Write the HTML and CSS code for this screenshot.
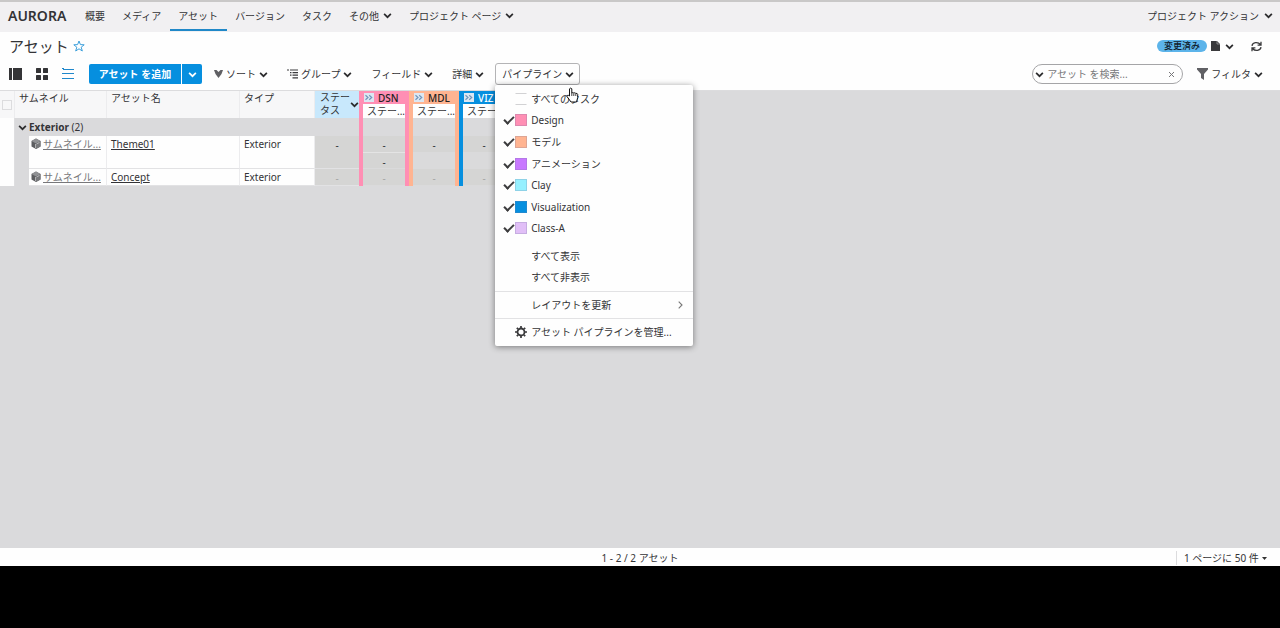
FILE: index.html
```html
<!DOCTYPE html>
<html lang="ja">
<head>
<meta charset="utf-8">
<title>AURORA - アセット</title>
<link rel="stylesheet" href="styles.css">
</head>
<body>
<svg class="defs" aria-hidden="true">
  <symbol id="chev" viewBox="0 0 8 8"><path d="M1 2.5 4 5.5 7 2.5" fill="none" stroke="currentColor" stroke-width="1.5"/></symbol>
  <symbol id="cube" viewBox="0 0 10 12"><path d="M5 .5 9.500 3v5.500L5 11 .5 8.500V3z" fill="#5c5d60"/><path d="M5 .5 9.500 3 5 5.500.5 3z" fill="#909194"/><path d="M5 5.500V11l4.500-2.500V3z" fill="#77787b"/><path d="M4.500 6v4M5.500 6 8.500 4.400" fill="none" stroke="#c4c4c6" stroke-width=".8"/></symbol>
  <symbol id="pipe" viewBox="0 0 10 9"><rect width="10" height="9" fill="#dce7f2"/><path d="M1.500 2.200 4 4.500 1.500 6.800M5.200 2.200l2.500 2.300-2.500 2.300" fill="none" stroke="#7195ba" stroke-width="1.200"/></symbol>
</svg>
<div class="app">
  <header class="nav">
    <span class="brand">AURORA</span>
    <nav class="tabs">
      <a class="tab" href="#">概要</a>
      <a class="tab" href="#">メディア</a>
      <a class="tab active" href="#">アセット</a>
      <a class="tab" href="#">バージョン</a>
      <a class="tab" href="#">タスク</a>
      <a class="tab" href="#">その他<svg class="chev"><use href="#chev"/></svg></a>
      <a class="tab" href="#">プロジェクト ページ<svg class="chev"><use href="#chev"/></svg></a>
    </nav>
    <button class="tab project-actions">プロジェクト アクション<svg class="chev"><use href="#chev"/></svg></button>
  </header>

  <div class="heading">
    <h1 class="title">アセット</h1>
    <button class="icon-btn star" aria-label="お気に入り"><svg width="12" height="12" viewBox="0 0 12 12"><path d="M6 1 7.400 4.600 11.200 4.800 8.200 7.200 9.300 11 6 8.800 2.700 11 3.800 7.200.8 4.800 4.600 4.600z" fill="none" stroke="#3b9fdb"/></svg></button>
    <div class="page-tools">
      <span class="badge">変更済み</span>
      <button class="icon-btn save" aria-label="ページを保存"><svg width="9" height="10" viewBox="0 0 9 10"><path d="M0 0h6l3 3v7H0z" fill="#3a3a3c"/><path d="M6 0v3h3" fill="none" stroke="#aaa" stroke-width=".7"/></svg><svg class="chev"><use href="#chev"/></svg></button>
      <button class="icon-btn" aria-label="更新"><svg width="11" height="11" viewBox="0 0 11 11" fill="none" stroke="#3a3a3c" stroke-width="1.300"><path d="M1 4.800C1.500 1 7 .5 9.500 3.500M10 .8v3.400H6.600M10 6.200C9.500 10 4 10.500 1.500 7.500M1 10.200V6.800h3.400"/></svg></button>
    </div>
  </div>

  <div class="toolbar">
    <div class="views">
      <button class="icon-btn" aria-label="詳細表示"><svg width="14" height="12" viewBox="0 0 14 12" fill="#343436"><path d="M0 0h3v12H0zM4 0h9v12H4z"/></svg></button>
      <button class="icon-btn" aria-label="サムネイル表示"><svg width="13" height="12" viewBox="0 0 13 12" fill="#343436"><rect width="5" height="5" rx=".5"/><rect x="7" width="5" height="5" rx=".5"/><rect y="7" width="5" height="5" rx=".5"/><rect x="7" y="7" width="5" height="5" rx=".5"/></svg></button>
      <button class="icon-btn" aria-label="リスト表示"><svg width="13" height="12" viewBox="0 0 13 12" fill="#2088cc"><path d="M1 1h11v1H1zM1 5h11v1H1zM1 10h11v1H1zM0 0h2v1H0zM0 5h1v1H0zM0 10h1v1H0z"/></svg></button>
    </div>
    <div class="split">
      <button class="add">アセット を追加</button>
      <button class="add-more" aria-label="その他の追加方法"><svg class="chev"><use href="#chev"/></svg></button>
    </div>
    <div class="menus">
      <button class="menu-btn"><svg width="9" height="8" viewBox="0 0 9 8"><path d="M0 0h2.500l2 2 2-2H9L7.500 4 4.500 8 1.500 4z" fill="#606064"/></svg><span>ソート</span><svg class="chev"><use href="#chev"/></svg></button>
      <button class="menu-btn"><svg width="11" height="10" viewBox="0 0 11 10" fill="none" stroke="#3a3a3c" stroke-width="1.200"><path d="M0 1h2M3 1h8M3 3.600h1.500M5.500 3.600H11M3 6.200h1.500M5.500 6.200H11M5.500 8.800H11"/></svg><span>グループ</span><svg class="chev"><use href="#chev"/></svg></button>
      <button class="menu-btn"><span>フィールド</span><svg class="chev"><use href="#chev"/></svg></button>
      <button class="menu-btn"><span>詳細</span><svg class="chev"><use href="#chev"/></svg></button>
    </div>
    <div class="pipeline">
      <button class="menu-btn open" aria-expanded="true"><span>パイプライン</span><svg class="chev"><use href="#chev"/></svg></button>
      <div class="dropdown">
        <div class="steps">
          <label class="item"><input class="check" type="checkbox"><span class="swatch none"></span>すべてのタスク</label>
          <label class="item"><input class="check" type="checkbox" checked><span class="swatch design"></span>Design</label>
          <label class="item"><input class="check" type="checkbox" checked><span class="swatch model"></span>モデル</label>
          <label class="item"><input class="check" type="checkbox" checked><span class="swatch anim"></span>アニメーション</label>
          <label class="item"><input class="check" type="checkbox" checked><span class="swatch clay"></span>Clay</label>
          <label class="item"><input class="check" type="checkbox" checked><span class="swatch viz"></span>Visualization</label>
          <label class="item"><input class="check" type="checkbox" checked><span class="swatch classa"></span>Class-A</label>
        </div>
        <div class="actions">
          <button class="action">すべて表示</button>
          <button class="action">すべて非表示</button>
        </div>
        <div class="section"><button class="action">レイアウトを更新<svg class="arrow" width="5" height="8" viewBox="0 0 5 8"><path d="M.7.7 4 4 .7 7.300" fill="none" stroke="#777" stroke-width="1.100"/></svg></button></div>
        <div class="section"><button class="action with-icon"><svg width="12" height="12" viewBox="0 0 12 12" fill="none" stroke="#39393b"><circle cx="6" cy="6" r="3.500" stroke-width="1.800"/><path d="M6 0v2M6 10v2M0 6h2M10 6h2M1.800 1.800l1.400 1.400M8.800 8.800l1.400 1.400M1.800 10.200l1.400-1.400M8.800 3.200l1.400-1.400" stroke-width="1.700"/></svg>アセット パイプラインを管理...</button></div>
      </div>
      <svg class="pointer" width="13" height="16" viewBox="0 0 13 16"><path d="M3.500 9V1.800q1.300-1.500 2.300 0V6q1-.8 2 0 1-.6 2 .4 1.600-.4 1.900 1v3.200L10.500 15H5L1 9.500q0-1.500 1.300-1.200z" fill="#fff" stroke="#111"/><path d="M5.800 6v3M7.800 6.500v2.500M9.800 7v2" stroke="#111" stroke-width=".8"/></svg>
    </div>
    <div class="find">
      <div class="search">
        <svg class="chev"><use href="#chev"/></svg>
        <input class="search-input" type="text" placeholder="アセット を検索..." aria-label="アセット を検索">
        <button class="icon-btn" aria-label="クリア"><svg width="7" height="7" viewBox="0 0 7 7"><path d="M1 1l5 5M6 1 1 6" stroke="#77777a"/></svg></button>
      </div>
      <button class="menu-btn"><svg width="11" height="12" viewBox="0 0 11 12"><path d="M0 0h11v1.500L7 6v6L4 10V6L0 1.500z" fill="#606064"/></svg><span>フィルタ</span><svg class="chev"><use href="#chev"/></svg></button>
    </div>
  </div>

  <main class="grid-area">
    <table class="assets">
      <colgroup><col class="c-check"><col class="c-indent"><col class="c-thumb"><col class="c-name"><col class="c-type"><col class="c-status"><col class="c-step"><col class="c-step"><col class="c-step"></colgroup>
      <thead>
        <tr class="head">
          <th class="select"><input class="select-all" type="checkbox" aria-label="すべて選択"></th>
          <th colspan="2">サムネイル</th>
          <th>アセット名</th>
          <th>タイプ</th>
          <th class="status"><div class="status-head"><span>ステータス</span><svg class="chev"><use href="#chev"/></svg></div></th>
          <th class="step dsn"><div class="step-name"><svg width="10" height="9"><use href="#pipe"/></svg>DSN</div><div class="step-field">ステー...</div></th>
          <th class="step mdl"><div class="step-name"><svg width="10" height="9"><use href="#pipe"/></svg>MDL</div><div class="step-field">ステー...</div></th>
          <th class="step vis"><div class="step-name"><svg width="10" height="9"><use href="#pipe"/></svg>VIZ</div><div class="step-field">ステー...</div></th>
        </tr>
      </thead>
      <tbody>
        <tr class="group">
          <td class="select"></td>
          <td colspan="5"><div class="group-name"><svg class="chev"><use href="#chev"/></svg><span><b>Exterior</b> (2)</span></div></td>
          <td class="step dsn"></td><td class="step mdl"></td><td class="step vis"></td>
        </tr>
        <tr class="row tall">
          <td class="select"></td><td class="indent"></td>
          <td class="cell"><a class="thumb" href="#"><svg width="10" height="12"><use href="#cube"/></svg><span>サムネイル...</span></a></td>
          <td class="cell"><a class="name" href="#">Theme01</a></td>
          <td class="cell">Exterior</td>
          <td class="value"><div class="dash">-</div></td>
          <td class="value step dsn"><div class="dash">-</div><div class="dash second">-</div></td>
          <td class="value step mdl"><div class="dash">-</div></td>
          <td class="value step vis"><div class="dash">-</div></td>
        </tr>
        <tr class="row">
          <td class="select"></td><td class="indent"></td>
          <td class="cell"><a class="thumb" href="#"><svg width="10" height="12"><use href="#cube"/></svg><span>サムネイル...</span></a></td>
          <td class="cell"><a class="name" href="#">Concept</a></td>
          <td class="cell">Exterior</td>
          <td class="value faint"><div class="dash">-</div></td>
          <td class="value faint step dsn"><div class="dash">-</div></td>
          <td class="value faint step mdl"><div class="dash">-</div></td>
          <td class="value faint step vis"><div class="dash">-</div></td>
        </tr>
      </tbody>
    </table>
  </main>

  <footer class="pager">
    <span class="count">1 - 2 / 2 アセット</span>
    <div class="per-page">
      <select class="page-size" aria-label="ページあたりの件数"><option>1 ページに 50 件</option></select>
      <svg width="5" height="3" viewBox="0 0 5 3"><path d="M0 0h5L2.500 3z" fill="#333"/></svg>
    </div>
  </footer>
</div>
</body>
</html>
```
FILE: styles.css
```css
* { box-sizing: border-box; }

body {
  margin: 0;
  background: #000;
  color: #333336;
  font: 10px/14px "Noto Sans", "Noto Sans CJK JP", sans-serif;
}

button, input, select { font: inherit; color: inherit; }
button { margin: 0; padding: 0; border: 0; background: none; cursor: pointer; }
a { color: inherit; text-decoration: none; }
svg { display: block; flex: none; }

.defs { position: absolute; width: 0; height: 0; }
.chev { width: 9px; height: 9px; color: #2b2b2d; }

.app {
  display: flex;
  flex-direction: column;
  min-height: calc(100vh - 62px);
  background: #fefefe;
}

/* Navigation */
.nav {
  display: flex;
  height: 32px;
  padding: 0 7px 0 8px;
  border-top: 2px solid #c9c8c8;
  background: #f1f0f2;
}
.brand {
  width: 69px;
  font-size: 14px;
  font-weight: 600;
  line-height: 28px;
}
.tabs { display: flex; }
.tab {
  display: flex;
  align-items: center;
  gap: 5px;
  height: 29px;
  border-bottom: 2px solid transparent;
  white-space: nowrap;
}
.tabs .tab { gap: 4px; padding: 0 9px 0 8px; }
.tabs .active { border-color: #2088c8; }
.project-actions { margin-left: auto; }

/* Page heading */
.heading {
  display: flex;
  align-items: center;
  height: 28px;
  padding: 0 18px 0 9px;
}
.title { margin: 0; font-size: 15px; font-weight: 400; line-height: 22px; }
.star { margin-left: 4px; }
.icon-btn { display: flex; align-items: center; }
.page-tools { display: flex; align-items: center; margin-left: auto; }
.badge {
  width: 50px;
  border-radius: 6px;
  background: #5cb4ea;
  color: #10202c;
  font-size: 9px;
  font-weight: 500;
  line-height: 12px;
  text-align: center;
}
.save { gap: 5px; margin: 0 17px 0 4px; }

/* Toolbar */
.toolbar {
  display: flex;
  align-items: center;
  height: 30px;
  padding: 0 17px 2px 9px;
}
.views { display: flex; gap: 13px; width: 80px; }
.split { display: flex; gap: 1px; height: 20px; }
.add, .add-more { background: #068fdf; color: #fff; }
.add { width: 92px; border-radius: 2px 0 0 2px; font-weight: 700; }
.add-more {
  display: flex;
  align-items: center;
  justify-content: center;
  width: 20px;
  border-radius: 0 2px 2px 0;
}
.add-more .chev { color: #fff; }
.menus { display: flex; gap: 19px; margin-left: 12px; }
.menu-btn { display: flex; align-items: center; gap: 3px; white-space: nowrap; }
.pipeline { position: relative; margin-left: 11px; }
.open {
  width: 85px;
  height: 22px;
  padding: 0 6px;
  border: 1px solid #b4b4b6;
  border-radius: 3px;
}
.find { display: flex; align-items: center; gap: 14px; margin-left: auto; }
.search {
  display: flex;
  align-items: center;
  gap: 3px;
  width: 151px;
  height: 20px;
  padding: 0 7px 0 2px;
  border: 1px solid #a5a5a7;
  border-radius: 10px;
}
.search-input {
  flex: 1;
  min-width: 0;
  padding: 0;
  border: 0;
  outline: 0;
  background: none;
}
.search-input::placeholder { color: #77777a; }

/* Pipeline menu */
.dropdown {
  position: absolute;
  z-index: 2;
  top: 22px;
  left: 0;
  width: 198px;
  border-radius: 2px;
  background: #fefefe;
  box-shadow: 0 1px 6px rgba(0, 0, 0, .45);
}
.steps { display: flex; flex-direction: column; height: 154px; padding-top: 3px; }
.item { display: flex; flex: 1; align-items: center; padding-left: 9px; }
.check {
  width: 8px;
  height: 8px;
  margin: 0 3px 0 0;
  appearance: none;
}
.check:checked::before {
  content: "";
  display: block;
  width: 8px;
  height: 4px;
  border: solid #3c3c3e;
  border-width: 0 0 2px 2px;
  transform: rotate(-45deg);
}
.swatch {
  width: 12px;
  height: 12px;
  margin-right: 4px;
  border: 1px solid rgba(120, 120, 160, .25);
}
.none { border-color: #d2d2d4 transparent; }
.design { background: #ff8fb4; }
.model { background: #ffb491; }
.anim { background: #c878ff; }
.clay { background: #96f0ff; }
.viz { background: #068fdf; }
.classa { background: #e1bff7; }
.actions { padding: 6px 0 4px; }
.section { padding: 2px 0; border-top: 1px solid #e2e2e4; }
.section:last-child { padding-bottom: 3px; }
.action {
  display: flex;
  align-items: center;
  width: 100%;
  height: 21px;
  padding: 0 10px 0 36px;
}
.section .action { height: 22px; }
.arrow { margin-left: auto; }
.section .with-icon { gap: 4px; padding-left: 20px; }
.pointer { position: absolute; z-index: 3; top: 24px; left: 71px; }

/* Asset grid */
.grid-area {
  flex: 1;
  overflow: hidden;
  border-top: 1px solid #dcdcde;
  background: #dadadc;
}
.assets {
  width: 509px;
  border-collapse: separate;
  border-spacing: 0;
  table-layout: fixed;
}
.c-check { width: 15px; }
.c-indent { width: 14px; }
.c-thumb { width: 78px; }
.c-name { width: 133px; }
.c-type { width: 75px; }
.c-status { width: 44px; }
.c-step { width: 50px; }
.assets th, .assets td { padding: 0; font-weight: 400; text-align: left; vertical-align: top; }
.head { height: 27px; }
.assets .head th { padding: 0 4px; border-right: 1px solid #ececee; background: #f7f7f8; }
.assets .head .select { padding: 9px 0 0 2px; }
.assets .select { border-right: 1px solid #dedee0; background: #fefefe; }
.select-all {
  display: block;
  width: 10px;
  height: 10px;
  margin: 0;
  border: 1px solid #dcdcde;
  appearance: none;
}
.assets .head .status { padding: 0 0 0 5px; border-right: 0; background: #c8e8fc; }
.status-head { display: flex; align-items: center; line-height: 13px; }
.status-head span { width: 30px; }
.assets .step { border: solid; border-width: 0 4px; }
.assets .head .step { padding: 0; border-right-width: 4px; border-right-style: solid; }
.assets .dsn, .assets .head .dsn { border-color: #ff8fb4; }
.assets .mdl, .assets .head .mdl { border-color: #ffb491; }
.assets .vis, .assets .head .vis { border-color: #068fdf; }
.assets .head .dsn { background: #ff8fb4; }
.assets .head .mdl { background: #ffb491; }
.assets .head .vis { background: #068fdf; }
.step-name {
  display: flex;
  align-items: center;
  gap: 4px;
  height: 13px;
  padding-left: 1px;
  color: #222;
  font-weight: 500;
}
.vis .step-name { color: #fff; }
.step-field {
  height: 14px;
  padding-left: 4px;
  background: #fefefe;
  white-space: nowrap;
}
.group td { height: 18px; }
.group-name {
  display: flex;
  align-items: center;
  gap: 2px;
  height: 18px;
  padding-left: 3px;
}
.row { height: 17px; }
.tall { height: 33px; }
.assets .cell {
  padding: 1px 4px;
  border-right: 1px solid #ececee;
  border-bottom: 1px solid #e2e2e4;
  background: #fefefe;
}
.assets .cell:nth-child(3) { padding: 1px 0 1px 2px; }
.thumb { display: flex; align-items: center; gap: 2px; color: #77777a; }
.thumb span { text-decoration: underline; white-space: nowrap; }
.name { text-decoration: underline; }
.value { background: #d5d5d4; }
.assets .value { border-bottom: 1px solid #e2e2e4; text-align: center; }
.assets .value.step { border-bottom: 0; background: #dadadb; }
.dash { height: 16px; padding-top: 3px; background: #d5d5d4; line-height: 13px; }
.second { border-top: 1px solid #e4e4e4; }
.faint { color: #a5a5a5; }

/* Pager */
.pager {
  display: grid;
  grid-template-columns: 1fr auto 1fr;
  align-items: center;
  height: 18px;
  padding-top: 2px;
}
.count { grid-column: 2; }
.per-page {
  display: flex;
  align-items: center;
  gap: 3px;
  justify-self: end;
  height: 14px;
  padding: 0 13px 0 7px;
  border-left: 1px solid #dcdcde;
}
.page-size { padding: 0; border: 0; background: none; appearance: none; }
```
